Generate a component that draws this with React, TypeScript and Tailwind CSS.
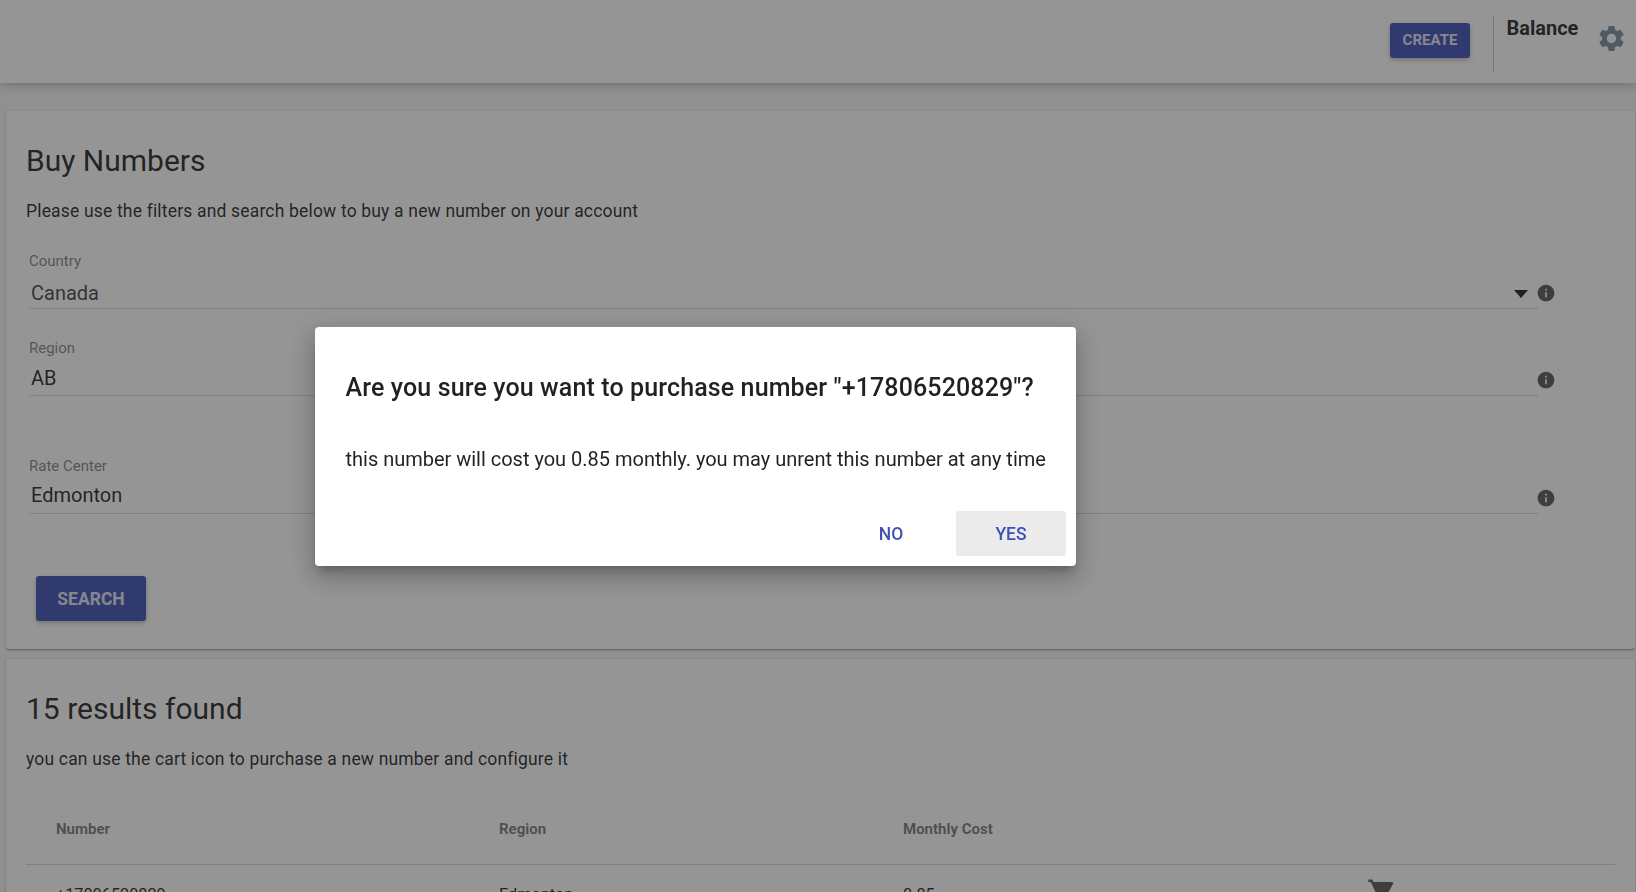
import type { ReactNode } from "react";
import { MdInfo, MdSettings, MdShoppingCart } from "react-icons/md";

const CARD_SHADOW =
  "shadow-[0_1px_3px_0_rgba(0,0,0,0.2),0_1px_1px_0_rgba(0,0,0,0.14),0_2px_1px_-1px_rgba(0,0,0,0.12)]";
const RAISED_SHADOW = "shadow-[0_2px_5px_0_rgba(0,0,0,0.26)]";

function Header() {
  return (
    <header className="relative z-10 flex h-[83px] shrink-0 items-start justify-end bg-white shadow-[0_2px_9px_0_rgba(0,0,0,0.25)]">
      <button
        className={`mt-[23px] h-[35px] w-20 rounded-[3px] bg-[#3f51b5] text-[15px] leading-[33px] font-bold text-white/87 ${RAISED_SHADOW}`}
      >
        CREATE
      </button>
      <div className="mt-4 ml-[23px] h-14 w-px bg-[#c4c4c4]" />
      <div className="mt-4 ml-[12.5px] w-[73px] text-xl leading-6 font-bold">Balance</div>
      <MdSettings className="mt-[22.5px] mr-[9.5px] ml-[16px] size-[31px] text-[#78909c]" />
    </header>
  );
}

type FieldProps = { label: string; value: string; select?: boolean; valueClass?: string; iconClass?: string };

function Field({ label, value, select = false, valueClass = "mt-2", iconClass = "mt-[30px]" }: FieldProps) {
  return (
    <div className="flex h-14 shrink-0 items-start">
      <div className="flex h-14 w-[1509px] flex-col border-b border-black/16">
        <div className="-mt-px h-[18px] text-[15px] leading-[18px] text-black/50">{label}</div>
        <div className={`flex items-center justify-between pr-2.5 pl-0.5 text-xl leading-6 ${valueClass}`}>
          <span>{value}</span>
          {select && (
            <svg className="mt-0.5 h-2 w-3.5" viewBox="0 0 14 8">
              <path d="M0 0h14L7 8z" fill="#000" fillOpacity="0.87" />
            </svg>
          )}
        </div>
      </div>
      <MdInfo className={`-ml-[2.5px] size-5 text-black/65 ${iconClass}`} />
    </div>
  );
}

function Heading({ title, children }: { title: string; children: ReactNode }) {
  return (
    <>
      <h2 className="text-[30px] leading-10">{title}</h2>
      <p className="mt-5 text-[17.5px] leading-5 tracking-[0.01em]">{children}</p>
    </>
  );
}

function SearchCard() {
  return (
    <section className={`flex h-[538px] shrink-0 flex-col rounded-[3px] bg-white pt-[30px] pl-5 ${CARD_SHADOW}`}>
      <Heading title="Buy Numbers">
        Please use the filters and search below to buy a new number on your account
      </Heading>
      <div className="mt-8 flex flex-col pl-[3px]">
        <Field label="Country" value="Canada" select valueClass="mt-[11px] text-black/75" iconClass="mt-[29.5px]" />
        <div className="h-[31px]" />
        <Field label="Region" value="AB" valueClass="mt-[9px]" />
        <div className="h-[62px]" />
        <Field label="Rate Center" value="Edmonton" iconClass="mt-[29.5px]" />
      </div>
      <button
        className={`mt-[62px] ml-2.5 h-[45px] w-[110px] shrink-0 rounded-[3px] bg-[#3f51b5] pt-0.5 text-[17.5px] font-bold text-white/87 ${RAISED_SHADOW}`}
      >
        SEARCH
      </button>
    </section>
  );
}

function ResultsCard() {
  return (
    <section className={`mt-2.5 h-[400px] shrink-0 rounded-[3px] bg-white pt-[30px] pr-5 pl-5 ${CARD_SHADOW}`}>
      <Heading title="15 results found">
        you can use the cart icon to purchase a new number and configure it
      </Heading>
      <div className="mt-[26px] grid h-[70px] grid-cols-[443px_404px_464px_1fr] items-center border-b border-black/16 pl-[30px] text-[15px] font-bold text-black/54">
        <div>Number</div>
        <div>Region</div>
        <div>Monthly Cost</div>
      </div>
      <div className="grid h-[60px] grid-cols-[443px_404px_464px_1fr] items-center pl-[30px] text-[16.25px] text-black/87">
        <div>+17806520829</div>
        <div>Edmonton</div>
        <div>0.85</div>
        <MdShoppingCart className="-mt-[7px] size-[30px] text-black/65" />
      </div>
    </section>
  );
}

function ConfirmDialog() {
  return (
    <div className="fixed inset-0 z-20 bg-[#212121]/48">
      <div
        role="dialog"
        className="absolute top-[327px] left-[315px] flex h-[239px] w-[761px] flex-col rounded-[4px] bg-white shadow-[0_7px_8px_-4px_rgba(0,0,0,0.2),0_13px_19px_2px_rgba(0,0,0,0.14),0_5px_24px_4px_rgba(0,0,0,0.12)]"
      >
        <h2 className="mt-[45px] ml-[30.5px] text-[25px] leading-8 font-medium tracking-[0.005em] whitespace-nowrap">
          Are you sure you want to purchase number "+17806520829"?
        </h2>
        <p className="mt-[41px] ml-[30.5px] text-xl leading-7 tracking-[-0.012px] whitespace-nowrap">
          this number will cost you 0.85 monthly. you may unrent this number at any time
        </p>
        <div className="mt-auto mr-2.5 mb-2.5 flex justify-end gap-2.5 text-[17.5px] font-medium text-[#3f51b5]">
          <button className="h-[45px] w-[110px] rounded-[3px] pt-0.5">NO</button>
          <button className="h-[45px] w-[110px] rounded-[3px] bg-[#ebebeb] pt-0.5">YES</button>
        </div>
      </div>
    </div>
  );
}

export default function App() {
  return (
    <div className="flex h-[892px] w-[1636px] flex-col overflow-hidden bg-[#f5f5f5] font-[Roboto,sans-serif] text-black/87">
      <Header />
      <main className="flex flex-col pt-7 pr-px pl-1.5">
        <SearchCard />
        <ResultsCard />
      </main>
      <ConfirmDialog />
    </div>
  );
}
